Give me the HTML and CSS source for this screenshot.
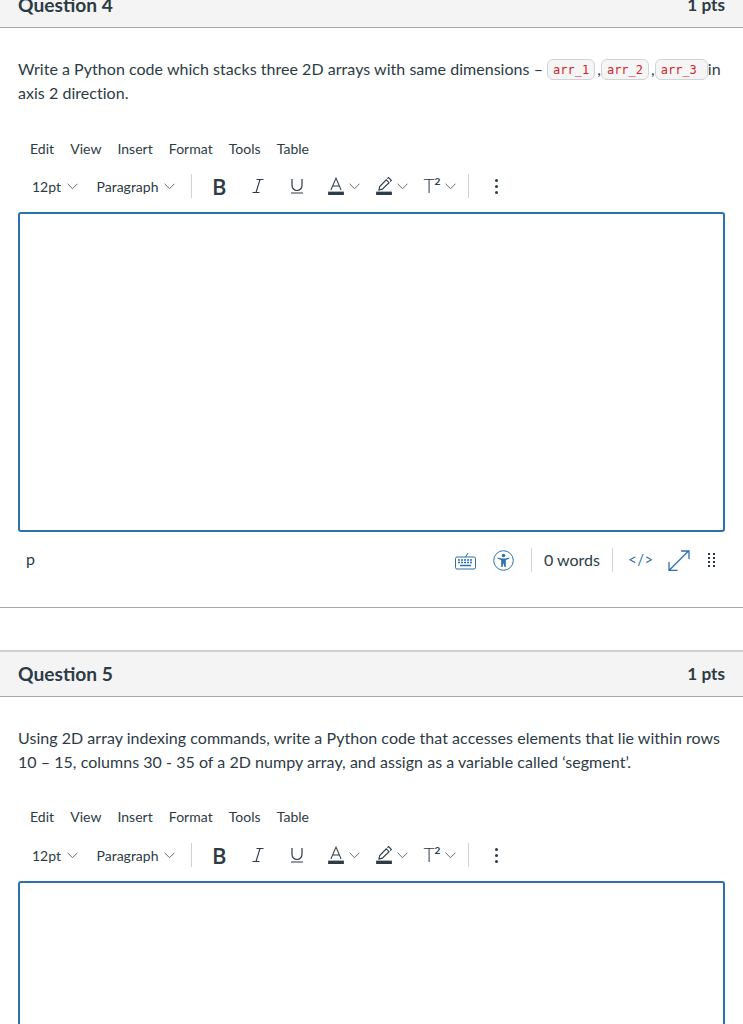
FILE: index.html
```html
<!DOCTYPE html>
<html lang="en">
<head>
    <meta charset="UTF-8">
    <title>Quiz</title>
    <link rel="stylesheet" href="styles.css">
</head>
<body>
    <svg class="defs" width="0" height="0">
        <symbol id="chev" viewBox="0 0 10 6"><path d="M.5.5 5 5 9.500.5" fill="none" stroke="#5d6972" stroke-width=".9"/></symbol>
    </svg>

    <div class="question">
        <div class="head"><span class="qname">Question 4</span><span class="pts">1 pts</span></div>
        <p class="text">Write a Python code which stacks three 2D arrays with same dimensions &#8211; <code>arr_1</code>,<code>arr_2</code>,<code class="wide">arr_3</code>in axis 2 direction.</p>
        <div class="menu"><span>Edit</span><span>View</span><span>Insert</span><span>Format</span><span>Tools</span><span>Table</span></div>
        <div class="toolbar">
            <span class="pick size">12pt <svg class="chev"><use href="#chev"/></svg></span>
            <span class="pick para">Paragraph <svg class="chev"><use href="#chev"/></svg></span>
            <i class="sep"></i>
            <b class="bold">B</b>
            <svg class="ico ital" viewBox="0 0 12 16"><path d="M4.500 1.500h7M.5 14.500h7M8 1.500 4 14.500" fill="none" stroke="#2d3b45" stroke-width="1.100"/></svg>
            <svg class="ico under" viewBox="0 0 14 16"><path d="M2 1v6.500a5 5 0 0 0 10 0V1M1 15h12" fill="none" stroke="#2d3b45" stroke-width="1.200"/></svg>
            <span class="color"><svg class="ico swatch" viewBox="0 0 14 16"><path d="M2.500 11.500 7 1l4.500 10.500M4 8h6" fill="none" stroke="#2d3b45" stroke-width=".9"/><rect y="13" width="14" height="3" fill="#2d3b45"/></svg><svg class="chev"><use href="#chev"/></svg></span>
            <span class="color high"><svg class="ico swatch" viewBox="0 0 14 16"><path d="M2.500 11.500 3.200 8.500 9 2.500l2.500 2.500-6 5.800zM10 1.500l1-1 2.500 2.500-1 1" fill="none" stroke="#2d3b45" stroke-width="1"/><rect y="13" width="14" height="3" fill="#2d3b45"/></svg><svg class="chev"><use href="#chev"/></svg></span>
            <span class="sup">T<small>2</small><svg class="chev"><use href="#chev"/></svg></span>
            <i class="sep two"></i>
            <span class="more"><i></i><i></i><i></i></span>
        </div>
        <div class="editor"></div>
        <div class="status">
            <span class="tag">p</span>
            <svg class="kbd" viewBox="0 0 21 19"><path d="M10.500 6 13 2" fill="none" stroke="#2d70ae"/><rect x=".5" y="6" width="20" height="12" rx="1.500" fill="none" stroke="#2d70ae"/><path d="M3 9h15M3 11.500h15" stroke="#2d70ae" stroke-width="1.500" stroke-dasharray="2 1"/><path d="M5 14.500h11" stroke="#2d70ae" stroke-width="1.500"/></svg>
            <svg class="a11y" viewBox="0 0 21 21"><circle cx="10.500" cy="10.500" r="9.800" fill="none" stroke="#2d70ae"/><circle cx="10.500" cy="5.500" r="1.700" fill="#2d70ae"/><path d="M4.500 7.500 8.500 8.500h4l4-1-.3 1.300-3.400 1.200v7h-1.300l-1-4-1 4H8.200v-7L4.800 8.800z" fill="#2d70ae"/></svg>
            <i class="sep three"></i>
            <span class="words">0 words</span>
            <i class="sep four"></i>
            <span class="html">&lt;/&gt;</span>
            <svg class="expand" viewBox="0 0 22 21"><path d="M1.500 20 20.500 1M13 1h8v8M1 12v8.300h8.500" fill="none" stroke="#2d70ae" stroke-width="1.300"/></svg>
            <span class="grip"><i></i><i></i><i></i><i></i><i></i><i></i><i></i><i></i></span>
        </div>
    </div>

    <div class="question next">
        <div class="head"><span class="qname">Question 5</span><span class="pts">1 pts</span></div>
        <p class="text">Using 2D array indexing commands, write a Python code that accesses elements that lie within rows 10 &#8211; 15, columns 30 - 35 of a 2D numpy array, and assign as a variable called &#8216;segment&#8217;.</p>
        <div class="menu"><span>Edit</span><span>View</span><span>Insert</span><span>Format</span><span>Tools</span><span>Table</span></div>
        <div class="toolbar">
            <span class="pick size">12pt <svg class="chev"><use href="#chev"/></svg></span>
            <span class="pick para">Paragraph <svg class="chev"><use href="#chev"/></svg></span>
            <i class="sep"></i>
            <b class="bold">B</b>
            <svg class="ico ital" viewBox="0 0 12 16"><path d="M4.500 1.500h7M.5 14.500h7M8 1.500 4 14.500" fill="none" stroke="#2d3b45" stroke-width="1.100"/></svg>
            <svg class="ico under" viewBox="0 0 14 16"><path d="M2 1v6.500a5 5 0 0 0 10 0V1M1 15h12" fill="none" stroke="#2d3b45" stroke-width="1.200"/></svg>
            <span class="color"><svg class="ico swatch" viewBox="0 0 14 16"><path d="M2.500 11.500 7 1l4.500 10.500M4 8h6" fill="none" stroke="#2d3b45" stroke-width=".9"/><rect y="13" width="14" height="3" fill="#2d3b45"/></svg><svg class="chev"><use href="#chev"/></svg></span>
            <span class="color high"><svg class="ico swatch" viewBox="0 0 14 16"><path d="M2.500 11.500 3.200 8.500 9 2.500l2.500 2.500-6 5.800zM10 1.500l1-1 2.500 2.500-1 1" fill="none" stroke="#2d3b45" stroke-width="1"/><rect y="13" width="14" height="3" fill="#2d3b45"/></svg><svg class="chev"><use href="#chev"/></svg></span>
            <span class="sup">T<small>2</small><svg class="chev"><use href="#chev"/></svg></span>
            <i class="sep two"></i>
            <span class="more"><i></i><i></i><i></i></span>
        </div>
        <div class="editor"></div>
    </div>
</body>
</html>
```

FILE: styles.css
```css
html {
    height: 1024px;
    overflow: hidden;
}
body {
    height: 1043px;
    overflow: hidden;
    margin: 0;
    margin-top: -19px;
    background-color: #fff;
    color: #2d3b45;
    font-family: Lato, "Open Sans", sans-serif;
    font-size: 16px;
}
.defs {
    display: block;
    height: 0;
}
.question {
    border-bottom: 1px solid #a8a8a8;
    height: 626px;
}
.question.next {
    border-bottom: 0;
    height: 393px;
    margin-top: 42px;
    overflow: hidden;
}
.head {
    display: flex;
    justify-content: space-between;
    align-items: center;
    box-sizing: border-box;
    height: 47px;
    padding: 0 18px 2px;
    background-color: #f4f4f4;
    border-top: 2px solid #d0d0d0;
    border-bottom: 1px solid #a8a8a8;
}
.qname {
    font-size: 19.2px;
    font-weight: 700;
}
.pts {
    font-size: 17.2px;
    font-weight: 700;
}
.text {
    margin: 29px 18px 0;
    font-size: 16px;
    letter-spacing: .035px;
    line-height: 24px;
    height: 48px;
}
code {
    display: inline-block;
    vertical-align: top;
    box-sizing: border-box;
    height: 21px;
    margin: 2px 2px 0 0;
    padding: 2px 5px 0;
    background-color: #f5f5f5;
    border: 1px solid #d0d4d8;
    border-radius: 6px;
    color: #d2232a;
    font-family: "DejaVu Sans Mono", monospace;
    font-size: 12px;
    letter-spacing: 0;
    line-height: 17px;
}
code.wide {
    padding-right: 10px;
    margin-right: 0;
}
.menu {
    display: flex;
    gap: 16px;
    margin-top: 35px;
    padding-left: 30px;
    font-size: 14px;
    letter-spacing: .03px;
    line-height: 18px;
}
.next .menu {
    margin-top: 34px;
}
.toolbar {
    display: flex;
    align-items: center;
    height: 24px;
    margin-top: 16px;
    font-size: 14px;
}
.next .toolbar {
    margin-top: 17px;
}
.pick {
    display: flex;
    align-items: center;
    gap: 6px;
}
.size {
    margin-left: 32px;
}
.para {
    margin-left: 19px;
}
.chev {
    width: 11px;
    height: 7px;
    margin-right: -.5px;
}
.sep {
    display: block;
    width: 1px;
    height: 24px;
    margin-left: 16px;
    background-color: #cfd3d6;
}
.sep.two {
    margin-left: 12px;
}
.bold {
    margin-left: 20px;
    font-size: 22px;
    font-weight: 600;
    font-family: "Open Sans", sans-serif;
}
.ico {
    width: 14px;
    height: 16px;
}
.ital {
    width: 12px;
    margin-left: 25px;
}
.under {
    margin-left: 26px;
}
.swatch {
    width: 16px;
    height: 18px;
}
.color {
    display: flex;
    align-items: center;
    gap: 5px;
    margin-left: 24px;
}
.color.high {
    margin-left: 17px;
}
.sup {
    display: flex;
    align-items: center;
    margin-left: 16px;
    font-size: 19px;
    font-weight: 300;
    line-height: 24px;
}
.sup small {
    align-self: flex-start;
    margin: -1px 5px 0 0;
    font-size: 10px;
    font-weight: 700;
    line-height: 16px;
}
.more {
    display: flex;
    flex-direction: column;
    gap: 3px;
    margin-left: 26px;
}
.more i {
    display: block;
    width: 3px;
    height: 3px;
    border-radius: 50%;
    background-color: #2d3b45;
}
.editor {
    box-sizing: border-box;
    height: 320px;
    margin: 14px 18px 0;
    border: 2px solid #2d70ae;
    border-radius: 3px;
}
.status {
    display: flex;
    align-items: center;
    height: 24px;
    margin-top: 16px;
}
.tag {
    width: 436px;
    margin-left: 26px;
    padding-bottom: 3px;
    font-size: 16px;
}
.kbd {
    width: 21px;
    height: 19px;
    margin-left: -7px;
}
.a11y {
    width: 21px;
    height: 21px;
    margin-left: 17px;
}
.sep.three {
    margin-left: 17px;
}
.words {
    margin-left: 12px;
    padding-bottom: 2px;
    font-size: 16px;
}
.sep.four {
    margin-left: 12px;
}
.html {
    margin-left: 15px;
    padding-bottom: 2px;
    color: #2d70ae;
    font-size: 15px;
    letter-spacing: .5px;
}
.expand {
    width: 22px;
    height: 21px;
    margin-left: 14px;
}
.grip {
    display: grid;
    grid-template-columns: 2px 2px;
    gap: 2px 3px;
    margin-left: 18px;
}
.grip i {
    display: block;
    width: 2px;
    height: 2px;
    background-color: #2d3b45;
}
```
